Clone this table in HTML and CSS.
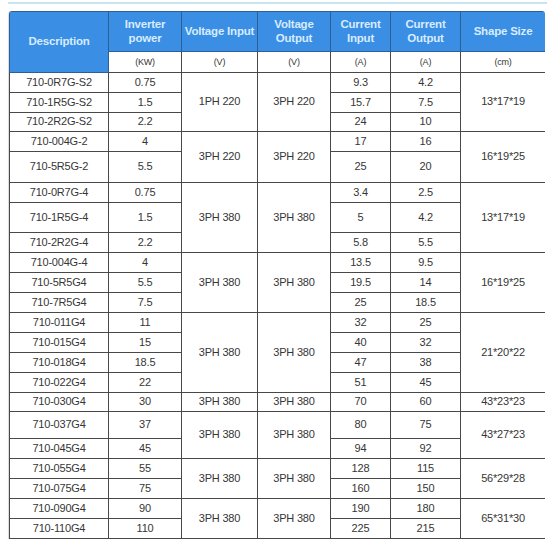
FILE: index.html
```html
<!DOCTYPE html>
<html lang="en">
<head>
    <meta charset="UTF-8">
    <meta name="viewport" content="width=device-width, initial-scale=1.0">
    <title>Inverter Specifications</title>
    <link rel="stylesheet" href="styles.css">
</head>
<body>
    <div class="top-line"></div>
    <div class="sheet">
        <table class="spec">
            <colgroup>
                <col class="c-desc">
                <col class="c-power">
                <col class="c-vin">
                <col class="c-vout">
                <col class="c-iin">
                <col class="c-iout">
                <col class="c-size">
            </colgroup>
            <thead>
                <tr class="h-main">
                    <th rowspan="2">Description</th>
                    <th>Inverter<br>power</th>
                    <th>Voltage Input</th>
                    <th>Voltage<br>Output</th>
                    <th>Current<br>Input</th>
                    <th>Current<br>Output</th>
                    <th>Shape Size</th>
                </tr>
                <tr class="h-unit">
                    <td>(KW)</td>
                    <td>(V)</td>
                    <td>(V)</td>
                    <td>(A)</td>
                    <td>(A)</td>
                    <td>(cm)</td>
                </tr>
            </thead>
            <tbody>
                <tr class="r20"><td>710-0R7G-S2</td><td>0.75</td><td rowspan="3">1PH 220</td><td rowspan="3">3PH 220</td><td>9.3</td><td>4.2</td><td rowspan="3">13*17*19</td></tr>
                <tr class="r20"><td>710-1R5G-S2</td><td>1.5</td><td>15.7</td><td>7.5</td></tr>
                <tr class="r19"><td>710-2R2G-S2</td><td>2.2</td><td>24</td><td>10</td></tr>

                <tr class="r20"><td>710-004G-2</td><td>4</td><td rowspan="2">3PH 220</td><td rowspan="2">3PH 220</td><td>17</td><td>16</td><td rowspan="2">16*19*25</td></tr>
                <tr class="r31"><td>710-5R5G-2</td><td>5.5</td><td>25</td><td>20</td></tr>

                <tr class="r20"><td>710-0R7G-4</td><td>0.75</td><td rowspan="3">3PH 380</td><td rowspan="3">3PH 380</td><td>3.4</td><td>2.5</td><td rowspan="3">13*17*19</td></tr>
                <tr class="r30"><td>710-1R5G-4</td><td>1.5</td><td>5</td><td>4.2</td></tr>
                <tr class="r20"><td>710-2R2G-4</td><td>2.2</td><td>5.8</td><td>5.5</td></tr>

                <tr class="r20"><td>710-004G-4</td><td>4</td><td rowspan="3">3PH 380</td><td rowspan="3">3PH 380</td><td>13.5</td><td>9.5</td><td rowspan="3">16*19*25</td></tr>
                <tr class="r20"><td>710-5R5G4</td><td>5.5</td><td>19.5</td><td>14</td></tr>
                <tr class="r20"><td>710-7R5G4</td><td>7.5</td><td>25</td><td>18.5</td></tr>

                <tr class="r20"><td>710-011G4</td><td>11</td><td rowspan="4">3PH 380</td><td rowspan="4">3PH 380</td><td>32</td><td>25</td><td rowspan="4">21*20*22</td></tr>
                <tr class="r20"><td>710-015G4</td><td>15</td><td>40</td><td>32</td></tr>
                <tr class="r20"><td>710-018G4</td><td>18.5</td><td>47</td><td>38</td></tr>
                <tr class="r20"><td>710-022G4</td><td>22</td><td>51</td><td>45</td></tr>

                <tr class="r19"><td>710-030G4</td><td>30</td><td>3PH 380</td><td>3PH 380</td><td>70</td><td>60</td><td>43*23*23</td></tr>

                <tr class="r27"><td>710-037G4</td><td>37</td><td rowspan="2">3PH 380</td><td rowspan="2">3PH 380</td><td>80</td><td>75</td><td rowspan="2">43*27*23</td></tr>
                <tr class="r20"><td>710-045G4</td><td>45</td><td>94</td><td>92</td></tr>

                <tr class="r20"><td>710-055G4</td><td>55</td><td rowspan="2">3PH 380</td><td rowspan="2">3PH 380</td><td>128</td><td>115</td><td rowspan="2">56*29*28</td></tr>
                <tr class="r20"><td>710-075G4</td><td>75</td><td>160</td><td>150</td></tr>

                <tr class="r20"><td>710-090G4</td><td>90</td><td rowspan="2">3PH 380</td><td rowspan="2">3PH 380</td><td>190</td><td>180</td><td rowspan="2">65*31*30</td></tr>
                <tr class="r20"><td>710-110G4</td><td>110</td><td>225</td><td>215</td></tr>
            </tbody>
        </table>
    </div>
</body>
</html>
```

FILE: styles.css
```css
body {
    margin: 0;
    padding: 0;
    background: #fff;
    font-family: "Liberation Sans", Arial, sans-serif;
}
.top-line {
    height: 2px;
    margin: 2px 3px 0 8px;
    background: #c6e5ee;
}
.sheet {
    width: 536px;
    margin: 7px 0 0 9px;
    border-radius: 3px 3px 0 0;
    overflow: hidden;
    box-shadow: -1px 1px 1px rgba(0,0,0,0.15);
}
.spec {
    width: 536px;
    table-layout: fixed;
    border-collapse: collapse;
    font-size: 11px;
    color: #363636;
    letter-spacing: -0.2px;
}
.c-desc { width: 99px; }
.c-power { width: 73px; }
.c-vin { width: 76px; }
.c-vout { width: 73px; }
.c-iin { width: 60px; }
.c-iout { width: 70px; }
.c-size { width: 85px; }
.spec th,
.spec td {
    padding: 0;
    text-align: center;
    vertical-align: middle;
    border: 1px solid #484848;
    line-height: 1.2;
}
.h-main {
    height: 40px;
}
.spec th {
    background: #3a8ee4;
    color: #d7ecff;
    font-size: 11.5px;
    font-weight: bold;
    border-color: #2d5f96;
}
.h-unit {
    height: 21px;
}
.h-unit td {
    font-size: 9px;
}
.r19 { height: 19px; }
.r20 { height: 20px; }
.r27 { height: 27px; }
.r30 { height: 30px; }
.r31 { height: 31px; }
```
